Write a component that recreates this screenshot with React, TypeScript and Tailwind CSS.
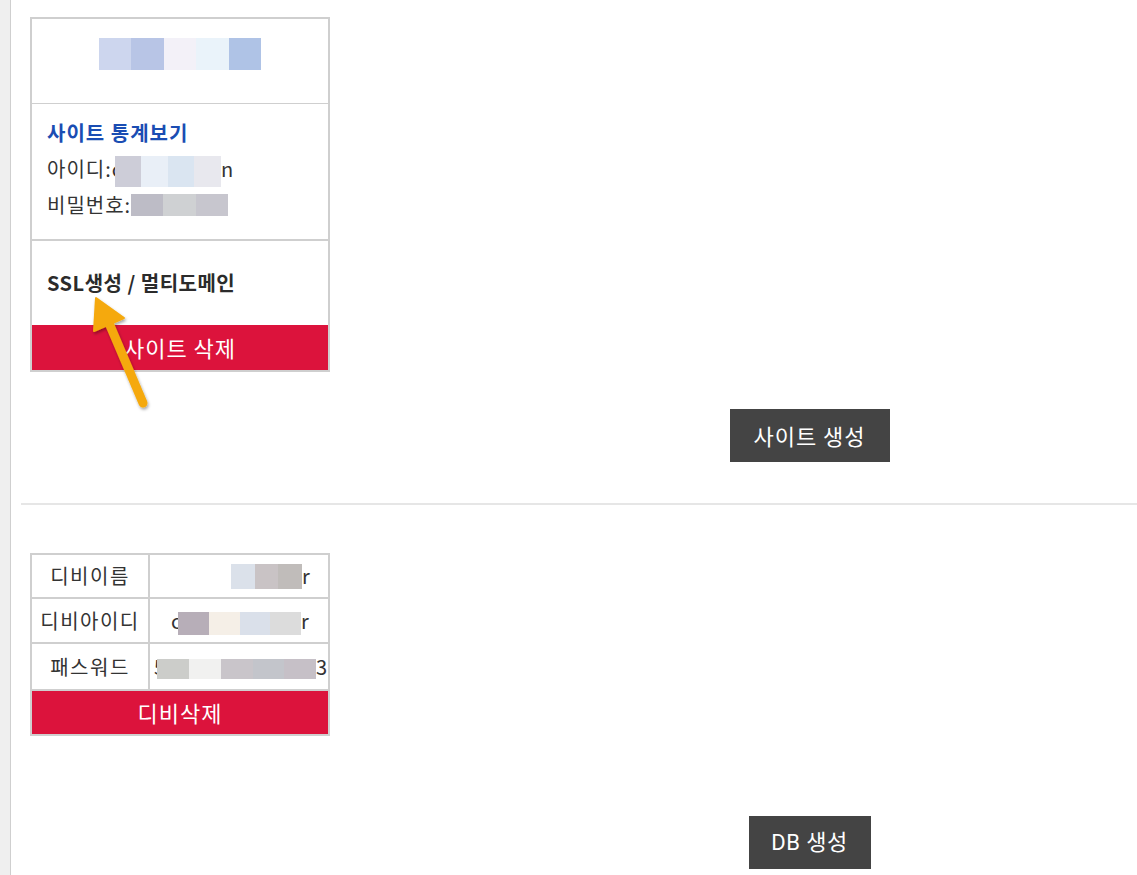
import React from 'react';

const font = { fontFamily: '"Noto Sans CJK KR", "Noto Sans", sans-serif' };

const Blur: React.FC<{ colors: string[]; w: number; h: number }> = ({ colors, w, h }) => (
  <span className="inline-flex align-middle shrink-0">
    {colors.map((c, i) => (
      <span key={i} style={{ background: c, width: w, height: h }} className="inline-block" />
    ))}
  </span>
);

const Arrow: React.FC = () => (
  <svg className="absolute left-0 top-0 pointer-events-none" width="200" height="420" viewBox="0 0 200 420">
    <defs>
      <filter id="sh" x="-50%" y="-50%" width="200%" height="200%">
        <feDropShadow dx="1" dy="2" stdDeviation="1.5" floodColor="#000" floodOpacity="0.35" />
      </filter>
    </defs>
    <g filter="url(#sh)">
      <line x1="79" y1="306" x2="113" y2="386" stroke="#f5a90d" strokeWidth="9" strokeLinecap="round" />
      <polygon points="66,281 64,314 94,301" fill="#f5a90d" stroke="#f5a90d" strokeWidth="2" strokeLinejoin="round" />
    </g>
  </svg>
);

const App: React.FC = () => {
  return (
    <div className="flex min-h-screen bg-white text-[#333]" style={font}>
      <div className="w-[11px] shrink-0 bg-[#efefef] border-r border-[#cfcfcf]" />
      <div className="flex-1 pl-[10px]">
        <div className="pt-[17px] pl-[9px]">
          <div className="relative w-[300px]">
            <div className="border-2 border-[#cfcfcf] bg-white">
              <div className="h-[85px] pt-[19px] flex justify-center items-start border-b border-[#cfcfcf]">
                <Blur colors={['#cdd6ee', '#b8c5e6', '#f3f1f8', '#eaf3fa', '#afc3e6']} w={32.4} h={32} />
              </div>
              <div className="h-[137px] pt-[11px] pl-[15px] text-[20px] tracking-[1px] leading-[36px] border-b-2 border-[#cfcfcf]">
                <div className="font-bold text-[#1a4db3]">사이트 통계보기</div>
                <div className="flex items-center">
                  아이디:c
                  <span className="-ml-[8px]">
                    <Blur colors={['#cdcdd8', '#e9eff7', '#dae5f1', '#e8e8ee']} w={26.5} h={31} />
                  </span>
                  <span>n</span>
                </div>
                <div className="flex items-center">
                  비밀번호:
                  <Blur colors={['#bdbcc6', '#cfd1d3', '#c7c6ce']} w={32.3} h={22} />
                </div>
              </div>
              <div className="h-[84px] flex items-center pl-[15px] text-[20px] tracking-[0.5px] font-bold text-[#2b2b2b]">
                SSL생성 / 멀티도메인
              </div>
              <div className="h-[45px] bg-[#dc133c] text-white text-[22px] tracking-[1px] flex items-center justify-center">
                사이트 삭제
              </div>
            </div>
            <Arrow />
          </div>
          <div className="flex justify-center pl-[452px] pt-[37px]">
            <div className="w-[160px] h-[53px] bg-[#444] text-white text-[22px] tracking-[1px] flex items-center justify-center">
              사이트 생성
            </div>
          </div>
        </div>

        <div className="mt-[41px] h-[2px] bg-[#e6e6e6]" />

        <div className="pt-[48px] pl-[9px]">
          <div className="w-[300px] border-2 border-[#cfcfcf] bg-white">
            <table className="w-full table-fixed border-collapse text-[20px]">
              <colgroup>
                <col className="w-[117px]" />
                <col />
              </colgroup>
              <tbody>
                <tr className="h-[43px]">
                  <td className="border-r-2 border-b-2 border-[#cfcfcf] text-center tracking-[1.5px]">디비이름</td>
                  <td className="border-b-2 border-[#cfcfcf]">
                    <div className="flex items-center pl-[81px] overflow-hidden">
                      <Blur colors={['#dbe1ea', '#c9c3c5', '#c0bcba']} w={23.7} h={25} />
                      <span>r</span>
                    </div>
                  </td>
                </tr>
                <tr className="h-[45px]">
                  <td className="border-r-2 border-b-2 border-[#cfcfcf] text-center tracking-[1.5px]">디비아이디</td>
                  <td className="border-b-2 border-[#cfcfcf]">
                    <div className="flex items-center pl-[21px] overflow-hidden">
                      <span>c</span>
                      <span className="-ml-[3px]">
                        <Blur colors={['#b7aeb8', '#f5efe7', '#dae0ea', '#dcdcdc']} w={30.7} h={23} />
                      </span>
                      <span>r</span>
                    </div>
                  </td>
                </tr>
                <tr className="h-[46px]">
                  <td className="border-r-2 border-[#cfcfcf] text-center tracking-[1.5px]">패스워드</td>
                  <td>
                    <div className="flex items-center pl-[4px] overflow-hidden">
                      <span>5</span>
                      <span className="-ml-[8px] relative">
                        <Blur colors={['#cccdca', '#f1f1f0', '#c9c5ca', '#c3c5cb', '#c6c0c7']} w={31.8} h={20} />
                      </span>
                      <span>3</span>
                    </div>
                  </td>
                </tr>
              </tbody>
            </table>
            <div className="h-[45px] border-t-2 border-[#cfcfcf] bg-[#dc133c] text-white text-[22px] tracking-[1px] flex items-center justify-center">
              디비삭제
            </div>
          </div>
          <div className="flex justify-center pl-[452px] pt-[80px] pb-[10px]">
            <div
              className="w-[122px] h-[53px] bg-[#444] text-white text-[22px] tracking-[0.5px] flex items-center justify-center"
              style={{ fontFamily: 'Roboto, "Noto Sans CJK KR", sans-serif' }}
            >
              DB 생성
            </div>
          </div>
        </div>
      </div>
    </div>
  );
};

export default App;
